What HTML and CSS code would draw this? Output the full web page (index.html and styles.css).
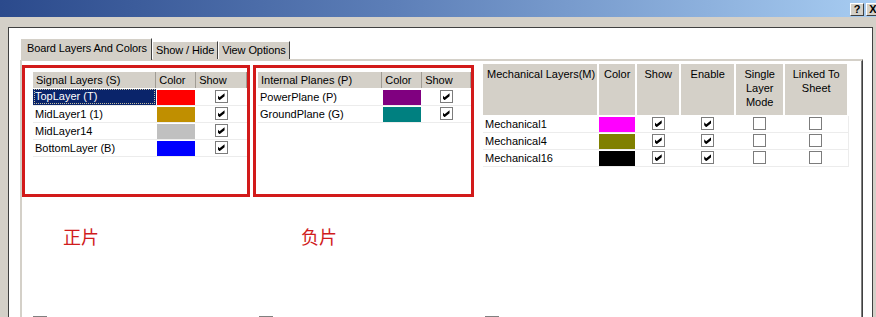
FILE: index.html
```html
<!DOCTYPE html>
<html lang="en">

<head>
    <meta charset="UTF-8">
    <title>Board Layers And Colors</title>
    <link rel="stylesheet" href="styles.css">
</head>

<body>

    <div class="titlebar">
        <span class="tb-btn">?</span>
        <span class="tb-btn">X</span>
    </div>

    <div class="frame">
        <div class="tabs">
            <div class="tab active">Board Layers And Colors</div>
            <div class="tab">Show / Hide</div>
            <div class="tab">View Options</div>
        </div>

        <div class="tabpage">
            <div class="groups">
                <!-- signal layers -->
                <div class="mark mark-signal">
                    <table class="layers signal">
                        <colgroup>
                            <col style="width:123px">
                            <col style="width:40px">
                            <col style="width:51px">
                        </colgroup>
                        <thead>
                            <tr>
                                <th>Signal Layers (S)</th>
                                <th>Color</th>
                                <th>Show</th>
                            </tr>
                        </thead>
                        <tbody>
                            <tr>
                                <td class="selected"><span class="focus">TopLayer (T)</span></td>
                                <td class="swatch"><div style="background:#ff0000"></div></td>
                                <td class="chk"><span class="box on"></span></td>
                            </tr>
                            <tr>
                                <td>MidLayer1 (1)</td>
                                <td class="swatch"><div style="background:#c08f00"></div></td>
                                <td class="chk"><span class="box on"></span></td>
                            </tr>
                            <tr>
                                <td>MidLayer14</td>
                                <td class="swatch"><div style="background:#c0c0c0"></div></td>
                                <td class="chk"><span class="box on"></span></td>
                            </tr>
                            <tr>
                                <td>BottomLayer (B)</td>
                                <td class="swatch"><div style="background:#0000ff"></div></td>
                                <td class="chk"><span class="box on"></span></td>
                            </tr>
                        </tbody>
                    </table>
                </div>

                <!-- internal planes -->
                <div class="mark mark-planes">
                    <table class="layers planes">
                        <colgroup>
                            <col style="width:124px">
                            <col style="width:40px">
                            <col style="width:49px">
                        </colgroup>
                        <thead>
                            <tr>
                                <th>Internal Planes (P)</th>
                                <th>Color</th>
                                <th>Show</th>
                            </tr>
                        </thead>
                        <tbody>
                            <tr>
                                <td>PowerPlane (P)</td>
                                <td class="swatch"><div style="background:#800080"></div></td>
                                <td class="chk"><span class="box on"></span></td>
                            </tr>
                            <tr>
                                <td>GroundPlane (G)</td>
                                <td class="swatch"><div style="background:#008080"></div></td>
                                <td class="chk"><span class="box on"></span></td>
                            </tr>
                        </tbody>
                    </table>
                </div>

                <!-- mechanical layers -->
                <table class="layers mech">
                    <colgroup>
                        <col style="width:113px">
                        <col style="width:38px">
                        <col style="width:44px">
                        <col style="width:55px">
                        <col style="width:49px">
                        <col style="width:64px">
                    </colgroup>
                    <thead>
                        <tr>
                            <th>Mechanical Layers(M)</th>
                            <th>Color</th>
                            <th>Show</th>
                            <th>Enable</th>
                            <th>Single Layer Mode</th>
                            <th>Linked To Sheet</th>
                        </tr>
                    </thead>
                    <tbody>
                        <tr>
                            <td>Mechanical1</td>
                            <td class="swatch"><div style="background:#ff00ff"></div></td>
                            <td class="chk"><span class="box on"></span></td>
                            <td class="chk"><span class="box on"></span></td>
                            <td class="chk"><span class="box"></span></td>
                            <td class="chk"><span class="box"></span></td>
                        </tr>
                        <tr>
                            <td>Mechanical4</td>
                            <td class="swatch"><div style="background:#808000"></div></td>
                            <td class="chk"><span class="box on"></span></td>
                            <td class="chk"><span class="box on"></span></td>
                            <td class="chk"><span class="box"></span></td>
                            <td class="chk"><span class="box"></span></td>
                        </tr>
                        <tr>
                            <td>Mechanical16</td>
                            <td class="swatch"><div style="background:#000000"></div></td>
                            <td class="chk"><span class="box on"></span></td>
                            <td class="chk"><span class="box on"></span></td>
                            <td class="chk"><span class="box"></span></td>
                            <td class="chk"><span class="box"></span></td>
                        </tr>
                    </tbody>
                </table>
            </div>

            <div class="notes">
                <span class="note">正片</span>
                <span class="note note-neg">负片</span>
            </div>

            <div class="stubs">
                <span class="stub"></span>
                <span class="stub"></span>
                <span class="stub"></span>
            </div>
        </div>
    </div>

</body>

</html>
```

FILE: styles.css
```css
/* Dialog */

body {
    margin: 0;
    padding: 0;
    width: 876px;
    height: 317px;
    overflow: hidden;
    background-color: #d4d0c8;
    font-family: "Liberation Sans", Arial, sans-serif;
    font-size: 11px;
    color: #000;
}

.titlebar {
    height: 17px;
    background: linear-gradient(to right, #2b4a8c, #5d7fb8 45%, #a8cdf2);
    display: flex;
    justify-content: flex-end;
    align-items: flex-start;
    gap: 2px;
    padding-top: 3px;
    box-sizing: border-box;
    margin-right: -4px;
}

.tb-btn {
    width: 14px;
    height: 13px;
    box-sizing: border-box;
    background-color: #d4d0c8;
    border: 1px solid;
    border-color: #fff #404040 #404040 #fff;
    font-weight: bold;
    font-size: 11px;
    line-height: 11px;
    text-align: center;
}

.frame {
    margin: 10px 3px 0 8px;
    height: 279px;
    background-color: #fff;
    border: 1px solid #404040;
    border-bottom: none;
    padding: 10px 9px 0 11px;
}

/* Tabs */

.tabs {
    display: flex;
    align-items: flex-end;
    height: 21px;
}

.tab {
    height: 18px;
    line-height: 17px;
    padding: 0 3px;
    background-color: #d4d0c8;
    border-left: 1px solid #fff;
    border-top: 1px solid #fff;
    border-right: 1px solid #404040;
    box-sizing: border-box;
    letter-spacing: -0.1px;
}

.tab.active {
    height: 22px;
    line-height: 19px;
    padding: 0 4px 0 6px;
    margin-bottom: -1px;
    position: relative;
    z-index: 1;
}

.tabpage {
    height: 256px;
    border-top: 2px solid #d4d0c8;
    border-left: 2px solid #d4d0c8;
    border-right: 1px solid #404040;
    box-shadow: inset -1px 0 #808080;
}

/* Layer groups */

.groups {
    display: flex;
    align-items: flex-start;
}

.mark {
    border: 3px solid #d21a1a;
    height: 132px;
    box-sizing: border-box;
    margin-top: 4px;
}

.mark-signal {
    width: 228px;
    padding: 4px 0 0 8px;
}

.mark-planes {
    width: 221px;
    margin-left: 3px;
    padding: 4px 0 0 2px;
}

.layers {
    border-collapse: collapse;
    table-layout: fixed;
}

.layers th {
    background-color: #d4d0c8;
    font-weight: normal;
    text-align: left;
    height: 16px;
    padding: 0 3px;
    box-sizing: border-box;
    border-right: 1px solid #a09c94;
    border-bottom: 1px solid #fff;
    white-space: nowrap;
}

.layers td {
    height: 17px;
    padding: 0 2px;
    box-sizing: border-box;
    border-bottom: 1px solid #ececec;
    white-space: nowrap;
}

.layers td.selected {
    background-color: #0a246a;
    color: #fff;
    padding: 0 1px;
}

.focus {
    display: block;
    height: 15px;
    line-height: 15px;
    padding-left: 1px;
    outline: 1px dotted #c8c0a0;
    outline-offset: -1px;
}

.layers td.swatch {
    padding: 1px 1px 0 1px;
}

.swatch div {
    height: 15px;
}

.layers td.chk {
    text-align: center;
    padding: 0;
}

.box {
    display: inline-block;
    width: 13px;
    height: 13px;
    box-sizing: border-box;
    border: 1px solid #7c7c7c;
    background-color: #fff;
    vertical-align: middle;
    position: relative;
}

.box.on::after {
    content: "";
    position: absolute;
    left: 2px;
    top: 2px;
    width: 7px;
    height: 7px;
    background-color: #000;
    clip-path: polygon(0 28%, 28% 57%, 100% 0, 100% 43%, 28% 100%, 0 71%);
}

/* Mechanical table */

.mech {
    margin-left: 9px;
    margin-top: 3px;
    border-right: 1px solid #ececec;
}

.mech th {
    height: 51px;
    vertical-align: top;
    text-align: center;
    white-space: normal;
    line-height: 14px;
    padding: 3px 2px 0;
    border-right: 2px solid #fff;
}

.mech th:first-child {
    text-align: left;
    padding-left: 4px;
    white-space: nowrap;
}

/* Annotations */

.notes {
    margin-top: 29px;
    padding-left: 41px;
    height: 20px;
}

.note {
    font-family: "Noto Sans CJK SC", sans-serif;
    font-size: 18px;
    line-height: 20px;
    color: #d01c1c;
}

.note-neg {
    margin-left: 199px;
}

.stubs {
    display: flex;
    margin-top: 70px;
    padding-left: 11px;
    gap: 212px;
}

.stub {
    width: 12px;
    height: 8px;
    border: 1px solid #808080;
    background-color: #fff;
}
```
